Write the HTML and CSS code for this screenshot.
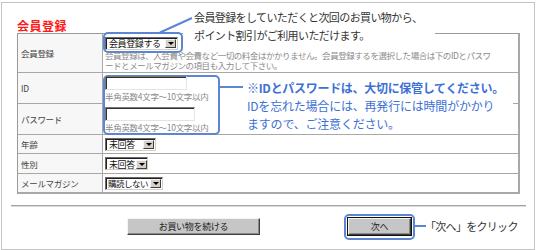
FILE: index.html
```html
<!DOCTYPE html>
<html lang="ja">
<head>
<meta charset="utf-8">
<link rel="stylesheet" href="styles.css">
</head>
<body>
<div class="frame">
  <h1 class="title">会員登録</h1>
  <div class="form">
    <div class="lbl">会員登録</div>
    <div class="val">
      <div class="field">
        <span class="select w-member"><span class="sel-text">会員登録する</span><span class="arrow"></span></span>
        <p class="note">会員登録は、入会費や会費など一切の料金はかかりません。会員登録するを選択した場合は下のIDとパスワ<br>ードとメールマガジンの項目も入力して下さい。</p>
      </div>
    </div>
    <div class="lbl">ID</div>
    <div class="val">
      <div class="field">
        <span class="input w-id"></span>
        <p class="hint">半角英数4文字～10文字以内</p>
      </div>
    </div>
    <div class="lbl">パスワード</div>
    <div class="val">
      <div class="field">
        <span class="input w-pw"></span>
        <p class="hint">半角英数4文字～10文字以内</p>
      </div>
    </div>
    <div class="lbl">年齢</div>
    <div class="val">
      <div class="field"><span class="select w-age"><span class="sel-text">未回答</span><span class="arrow"></span></span></div>
    </div>
    <div class="lbl">性別</div>
    <div class="val">
      <div class="field"><span class="select w-sex"><span class="sel-text">未回答</span><span class="arrow"></span></span></div>
    </div>
    <div class="lbl last">メールマガジン</div>
    <div class="val last">
      <div class="field"><span class="select w-mail"><span class="sel-text">購読しない</span><span class="arrow"></span></span></div>
    </div>
  </div>
  <hr class="rule">
  <div class="buttons">
    <span class="btn btn-cont">お買い物を続ける</span>
    <span class="btn btn-next">次へ</span>
  </div>

  <div class="callout callout-top">会員登録をしていただくと次回のお買い物から、<br>ポイント割引がご利用いただけます。</div>
  <div class="callout callout-id"><strong class="strong">※IDとパスワードは、大切に保管してください。</strong><br>IDを忘れた場合には、再発行には時間がかかり<br>ますので、ご注意ください。</div>
  <div class="ring ring-select"></div>
  <div class="ring ring-id"></div>
  <div class="ring ring-next"></div>
  <div class="callout-next">「次へ」をクリック</div>
  <svg class="lines" width="532" height="246" viewBox="0 0 532 246">
    <line x1="158" y1="29.5" x2="190" y2="15" stroke="#5b86d3" stroke-width="2"/>
    <line x1="216" y1="84" x2="241" y2="84" stroke="#5b86d3" stroke-width="2"/>
    <line x1="412" y1="223" x2="424" y2="223" stroke="#5b86d3" stroke-width="2"/>
  </svg>
</div>
</body>
</html>
```
FILE: styles.css
```css
html, body {
  margin: 0;
  padding: 0;
  background: #fff;
}
body {
  width: 536px;
  height: 250px;
  font-family: "Noto Sans CJK JP", "Noto Sans", sans-serif;
  overflow: hidden;
}
.frame {
  position: relative;
  box-sizing: border-box;
  width: 534px;
  height: 248px;
  margin: 2px 0 0 1px;
  border: 1px solid #c4c4c4;
}
.title {
  margin: 15px 0 0 15px;
  font-size: 12px;
  line-height: 15px;
  height: 15px;
  font-weight: bold;
  color: #ff1a1a;
  letter-spacing: 0.5px;
}
.form {
  display: grid;
  grid-template-columns: 85px 1fr;
  grid-template-rows: 39px 31px 31px 19px 20px 18px;
  box-sizing: border-box;
  width: 503px;
  margin-left: 15px;
  border-top: 1px solid #9a9a9a;
  border-left: 1px solid #9a9a9a;
  border-right: 2px solid #a8a8a8;
  border-bottom: 2px solid #a8a8a8;
}
.lbl {
  box-sizing: border-box;
  display: flex;
  align-items: center;
  padding-left: 3px;
  border-right: 1px solid #a8a8a8;
  border-bottom: 1px solid #a8a8a8;
  background: #f7f7f7;
  font-size: 8.5px;
  line-height: 10px;
  color: #444;
  letter-spacing: -0.3px;
  white-space: nowrap;
}
.val {
  box-sizing: border-box;
  display: flex;
  align-items: center;
  padding-left: 2px;
  border-bottom: 1px solid #a8a8a8;
}
.last {
  border-bottom: 0;
}
.field {
  position: relative;
  z-index: 2;
  display: flex;
  flex-direction: column;
  align-items: flex-start;
}
.note {
  margin: 0;
  font-size: 8.5px;
  line-height: 10px;
  color: #8a8a8a;
  letter-spacing: -0.45px;
  white-space: nowrap;
}
.hint {
  margin: 1px 0 0;
  font-size: 8.5px;
  line-height: 10px;
  color: #8a8a8a;
  letter-spacing: -0.3px;
  white-space: nowrap;
}
.select {
  box-sizing: border-box;
  display: flex;
  align-items: center;
  justify-content: space-between;
  height: 13px;
  background: #fff;
  border: 1px solid;
  border-color: #6a6a6a #d4d0c8 #d4d0c8 #6a6a6a;
  box-shadow: inset 1px 1px 0 #202020;
  padding: 1px 1px 0 3px;
}
.sel-text {
  font-size: 9px;
  line-height: 11px;
  color: #111;
  letter-spacing: -0.4px;
  white-space: nowrap;
}
.arrow {
  position: relative;
  flex-shrink: 0;
  box-sizing: border-box;
  width: 11px;
  height: 9px;
  margin-left: 1px;
  background: #d4d0c8;
  border: 1px solid;
  border-color: #f4f4f4 #404040 #404040 #f4f4f4;
}
.arrow::after {
  content: "";
  position: absolute;
  left: 2px;
  top: 2px;
  border-left: 3px solid transparent;
  border-right: 3px solid transparent;
  border-top: 3px solid #000;
}
.w-member { width: 73px; }
.w-age { width: 51px; }
.w-sex { width: 43px; }
.w-mail { width: 58px; padding-left: 2px; }
.w-mail .sel-text { font-size: 8.5px; letter-spacing: -0.5px; }
.input {
  box-sizing: border-box;
  display: block;
  height: 14px;
  background: #fff;
  border: 1px solid;
  border-color: #7a7a7a #e4e4e4 #e4e4e4 #7a7a7a;
  box-shadow: inset 1px 1px 0 #303030;
}
.w-id { width: 82px; }
.w-pw { width: 90px; }
.rule {
  box-sizing: border-box;
  width: 515px;
  height: 2px;
  margin: 11px 0 0 9px;
  border: 0;
  border-top: 1px solid #a4a4a4;
  border-bottom: 1px solid #dcdcdc;
}
.buttons {
  display: flex;
  gap: 88px;
  margin-top: 11px;
  padding-left: 125px;
}
.btn {
  box-sizing: border-box;
  display: flex;
  align-items: center;
  justify-content: center;
  height: 17px;
  background: #c6c6c6;
  border: 1px solid;
  border-color: #f4f4f4 #404040 #404040 #f4f4f4;
  box-shadow: inset -1px -1px 0 #8a8a8a;
  font-size: 9px;
  color: #222;
  letter-spacing: -0.3px;
  white-space: nowrap;
}
.btn-cont { width: 133px; }
.btn-next {
  width: 63px;
  outline: 1px solid #111;
}
.callout {
  position: absolute;
  z-index: 1;
  box-sizing: border-box;
  background: #fff;
  white-space: nowrap;
}
.callout-top {
  left: 181px;
  top: 6px;
  width: 252px;
  height: 38px;
  padding-left: 11px;
  font-size: 11px;
  line-height: 17.5px;
  color: #333;
  letter-spacing: -0.6px;
}
.callout-id {
  left: 217px;
  top: 71px;
  width: 294px;
  height: 59px;
  padding: 5px 0 0 28px;
  font-size: 12px;
  line-height: 18px;
  color: #3d70d6;
  letter-spacing: -0.2px;
}
.strong {
  font-weight: bold;
  letter-spacing: -0.3px;
}
.ring {
  position: absolute;
  z-index: 1;
  box-sizing: border-box;
  border: 2px solid #5b86d3;
  border-radius: 5px;
  background: #fff;
}
.ring-select {
  left: 101px;
  top: 29px;
  width: 80px;
  height: 21px;
}
.ring-id {
  left: 101px;
  top: 72px;
  width: 117px;
  height: 60px;
}
.ring-next {
  z-index: 3;
  left: 342px;
  top: 211px;
  width: 71px;
  height: 26px;
  background: transparent;
}
.callout-next {
  position: absolute;
  z-index: 3;
  left: 423px;
  top: 215px;
  font-size: 11px;
  line-height: 16px;
  color: #333;
  letter-spacing: -0.7px;
  white-space: nowrap;
}
.lines {
  position: absolute;
  z-index: 3;
  left: 0;
  top: 0;
}
```
